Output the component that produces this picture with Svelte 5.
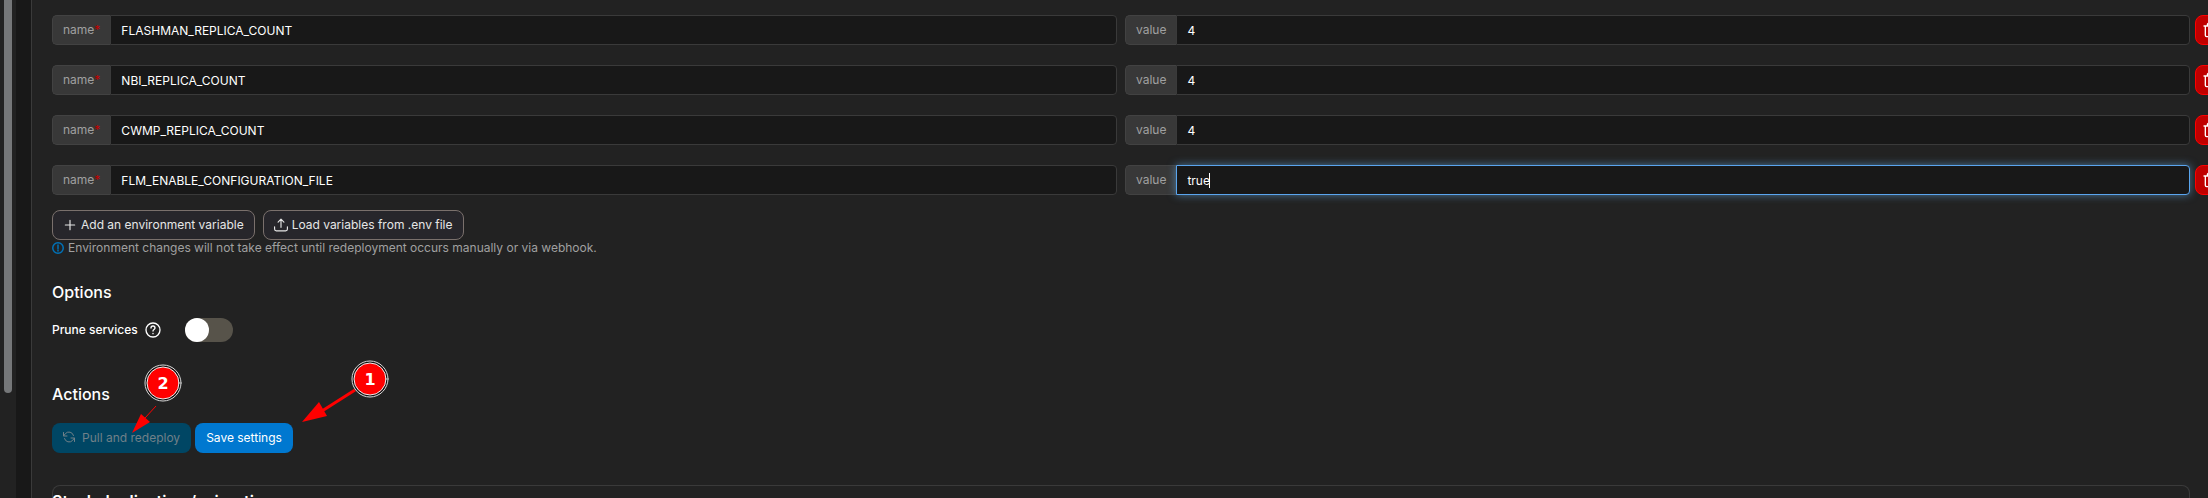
<script>
	let variables = $state([
		{ name: 'FLASHMAN_REPLICA_COUNT', value: '4' },
		{ name: 'NBI_REPLICA_COUNT', value: '4' },
		{ name: 'CWMP_REPLICA_COUNT', value: '4' },
		{ name: 'FLM_ENABLE_CONFIGURATION_FILE', value: 'true' }
	])
	let active = $state(3)
	let prune = $state(false)

	const add = () => variables.push({ name: '', value: '' })
	/**
	 * @param {number} index
	 */
	const remove = (index) => variables.splice(index, 1)
</script>

<div class="page">
	<div class="rail"><div class="thumb"></div></div>
	<div class="gutter"></div>
	<main>
		<div class="variables">
			{#each variables as variable, i}
				<div class="row">
					<div class="group">
						<label for="name-{i}">name<span class="required">*</span></label>
						<input id="name-{i}" type="text" bind:value={variable.name} />
					</div>
					<div class="group" class:active={active === i}>
						<label for="value-{i}">value</label>
						<input id="value-{i}" type="text" bind:value={variable.value} onfocus={() => (active = i)} />
						{#if active === i}<span class="caret"></span>{/if}
					</div>
					<button class="remove" type="button" aria-label="Remove" onclick={() => remove(i)}>
						<svg width="16" height="16" viewBox="0 0 24 24">
							<path d="M3 6h18M19 6v14a2 2 0 0 1-2 2H7a2 2 0 0 1-2-2V6M8 6V4a2 2 0 0 1 2-2h4a2 2 0 0 1 2 2v2M10 11v6M14 11v6" />
						</svg>
					</button>
				</div>
			{/each}
		</div>

		<div class="buttons">
			<button class="outline" type="button" onclick={add}>
				<svg width="14" height="14" viewBox="0 0 24 24"><path d="M12 4v16M4 12h16" /></svg>
				Add an environment variable
			</button>
			<button class="outline" type="button">
				<svg width="14" height="14" viewBox="0 0 24 24">
					<path d="M1 15v4a3 3 0 0 0 3 3h16a3 3 0 0 0 3-3v-4M12 16V2M7 7l5-5 5 5" />
				</svg>
				Load variables from .env file
			</button>
		</div>
		<p class="hint">
			<svg width="12" height="12" viewBox="0 0 24 24">
				<circle cx="12" cy="12" r="10.5" /><path d="M12 6v7M12 16v2" />
			</svg>
			Environment changes will not take effect until redeployment occurs manually or via webhook.
		</p>

		<h2>Options</h2>
		<div class="option">
			<label for="prune">Prune services</label>
			<svg width="16" height="16" viewBox="0 0 24 24">
				<circle cx="12" cy="12" r="10.5" />
				<path d="M9 9a3 3 0 0 1 6 0c0 2-3 2.500-3 4.500M12 17v.5" />
			</svg>
			<input id="prune" class="switch" type="checkbox" bind:checked={prune} />
		</div>

		<h2 class="actions-title">Actions</h2>
		<div class="actions">
			<button class="primary" type="button" disabled>
				<svg width="12" height="12" viewBox="0 0 24 24">
					<path d="M1 3v7h7M23 21v-7h-7M21 9A9.500 9.500 0 0 0 5 5l-4 5M23 14l-4 5A9.500 9.500 0 0 1 3 15" />
				</svg>
				Pull and redeploy
			</button>
			<button class="primary" type="button">Save settings</button>
		</div>

		<section class="card">
			<h2>Stack duplication / migration</h2>
		</section>
	</main>

	<svg class="notes" width="420" height="498" viewBox="0 0 420 498">
		<path class="line thin" d="M156 406 145 418" />
		<path class="head" d="M132 433 141 414 150 422Z" />
		<path class="line" d="M355 390 322 411" />
		<path class="head" d="M302 422 319 402 327 416Z" />
		{#each [{ x: 163, y: 383, text: '2' }, { x: 370, y: 379, text: '1' }] as note}
			<circle class="outer" cx={note.x} cy={note.y} r="18" />
			<circle class="inner" cx={note.x} cy={note.y} r="16" />
			<text x={note.x} y={note.y + 6}>{note.text}</text>
		{/each}
	</svg>
</div>

<style>
	:global(body) {
		background: #222;
		overflow: hidden;
	}
	.page {
		color: #fff;
		display: flex;
		font: 12px/18px Inter, sans-serif;
		height: 100vh;
		overflow: hidden;
		position: relative;
	}
	.rail {
		flex: none;
		padding: 0 4px;
		width: 8px;
	}
	.thumb {
		background: #757779;
		border-radius: 0 0 4px 4px;
		height: 79vh;
	}
	.gutter {
		background: #181818;
		border-right: 1px solid #3a3a3a;
		flex: none;
		width: 15px;
	}
	main {
		flex: 1;
		min-width: 0;
		padding: 15px 18px 0 20px;
	}
	button,
	input {
		box-sizing: border-box;
		font: inherit;
		margin: 0;
	}
	button {
		align-items: center;
		border-radius: 8px;
		display: flex;
		height: 30px;
	}
	svg {
		fill: none;
		flex: none;
		stroke: currentColor;
		stroke-linecap: round;
		stroke-linejoin: round;
		stroke-width: 2;
	}
	.variables {
		display: grid;
		gap: 20px;
	}
	.row {
		display: grid;
		gap: 8px;
		grid-template-columns: 1fr 1fr;
		position: relative;
	}
	.group {
		display: flex;
		position: relative;
	}
	.group label {
		background: #383838;
		border: 1px solid #424242;
		border-radius: 5px 0 0 5px;
		border-right: 0;
		box-sizing: border-box;
		color: #a0a0a0;
		height: 30px;
		line-height: 28px;
		padding: 0 10px;
	}
	.required {
		color: #c00000;
	}
	.group input {
		background: #181818;
		border: 1px solid #3a3a3a;
		border-radius: 0 4px 4px 0;
		color: #fff;
		flex: 1;
		height: 30px;
		min-width: 0;
		outline: 0;
		padding: 0 10px;
	}
	.active input {
		border-color: #5aa5ee;
		box-shadow: 0 0 8px rgba(102, 175, 233, 0.6);
		caret-color: transparent;
	}
	.caret {
		background: #fff;
		height: 15px;
		left: 84px;
		position: absolute;
		top: 8px;
		width: 1px;
	}
	.remove {
		background: #c00000;
		border: 1px solid #f00;
		color: #fff;
		left: calc(100% + 5px);
		padding: 0 6px;
		position: absolute;
	}
	.buttons {
		display: flex;
		gap: 8px;
		margin-top: 15px;
	}
	.outline {
		background: #27262b;
		border: 1px solid #7a706c;
		color: #e6e6e6;
		gap: 4px;
		padding: 0 10px;
	}
	.hint {
		align-items: center;
		color: #a0a0a0;
		display: flex;
		gap: 4px;
		line-height: 16px;
		margin: 0;
	}
	.hint svg {
		color: #0072b8;
		stroke-width: 3;
	}
	h2 {
		font-size: 16px;
		font-weight: 500;
		line-height: 20px;
		margin: 26px 0 0;
	}
	.option {
		align-items: center;
		display: flex;
		font-weight: 500;
		margin-top: 16px;
	}
	.option svg {
		margin: 0 24px 0 7px;
	}
	.switch {
		appearance: none;
		background: #57534a;
		border-radius: 12px;
		height: 24px;
		width: 48px;
	}
	.switch::before {
		background: #fff;
		border-radius: 50%;
		content: '';
		display: block;
		height: 24px;
		width: 24px;
	}
	.switch:checked::before {
		margin-left: 24px;
	}
	.actions-title {
		margin-top: 42px;
	}
	.actions {
		display: flex;
		gap: 4px;
		margin-top: 19px;
	}
	.primary {
		background: #0078d0;
		border: 0;
		color: #fff;
		gap: 7px;
		padding: 0 11px;
	}
	.primary svg {
		margin-bottom: 3px;
	}
	.primary:disabled {
		background: #004664;
		color: #708088;
	}
	.card {
		border-radius: 8px;
		box-shadow: inset 0 0 0 1px #3a3a3a;
		margin-top: 32px;
		padding: 6px 0 16px;
	}
	.card h2 {
		font-weight: 600;
		margin: 0;
	}
	.notes {
		left: 0;
		pointer-events: none;
		position: absolute;
		top: 0;
	}
	.line {
		stroke: #f00;
		stroke-linecap: butt;
		stroke-width: 3;
	}
	.thin {
		stroke-width: 1;
	}
	.head {
		fill: #f00;
		stroke: none;
	}
	.outer {
		fill: #111;
		stroke: #ddd;
		stroke-width: 1;
	}
	.inner {
		fill: #f00;
		stroke: #eee;
		stroke-width: 1;
	}
	text {
		fill: #fff;
		font: bold 16px 'DejaVu Sans', sans-serif;
		stroke: none;
		text-anchor: middle;
	}
</style>
